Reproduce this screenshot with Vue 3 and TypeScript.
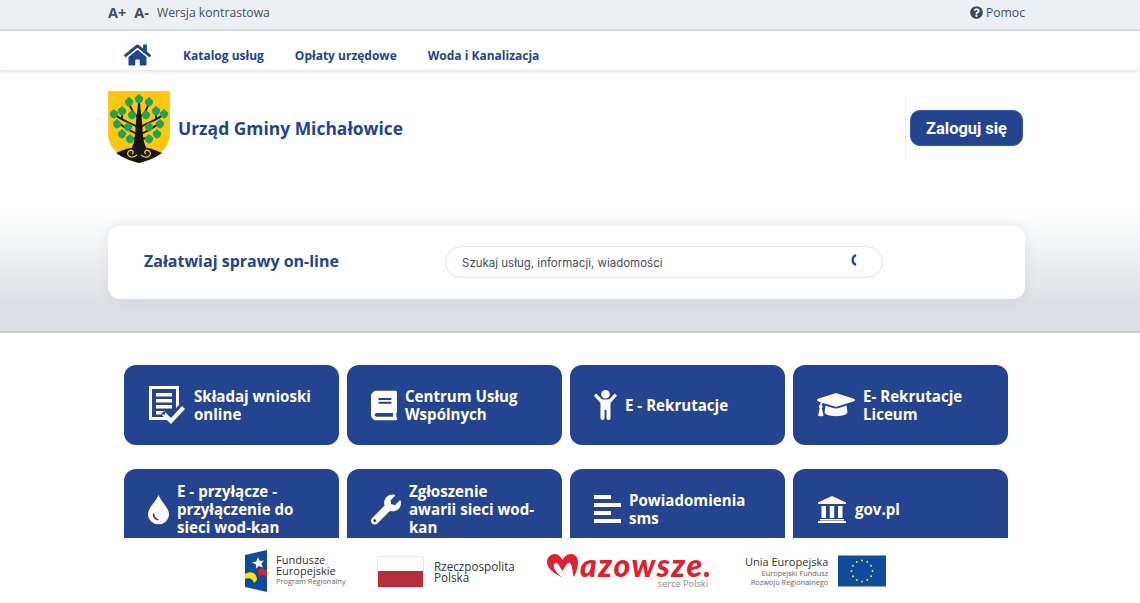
<script setup lang="ts">
interface Tile {
  lines: string[]
  vb: string
  w: number
  h: number
  d: string
}

const homePath = 'M280.37 148.26L96 300.11V464a16 16 0 0 0 16 16l112.06-.29a16 16 0 0 0 15.92-16V368a16 16 0 0 1 16-16h64a16 16 0 0 1 16 16v95.64a16 16 0 0 0 16 16.05L464 480a16 16 0 0 0 16-16V300L295.67 148.26a12.19 12.19 0 0 0-15.3 0zM571.6 251.47L488 182.56V44.05a12 12 0 0 0-12-12h-56a12 12 0 0 0-12 12v72.61L318.47 43a48 48 0 0 0-61 0L4.34 251.47a12 12 0 0 0-1.6 16.9l25.5 31A12 12 0 0 0 45.15 301l235.22-193.74a12.19 12.19 0 0 1 15.3 0L530.9 301a12 12 0 0 0 16.9-1.6l25.5-31a12 12 0 0 0-1.7-16.93z'
const helpPath = 'M504 256c0 136.997-111.043 248-248 248S8 392.997 8 256C8 119.083 119.043 8 256 8s248 111.083 248 248zM262.655 90c-54.497 0-89.255 22.957-116.549 63.758-3.536 5.286-2.353 12.415 2.715 16.258l34.699 26.31c5.205 3.947 12.621 3.008 16.665-2.122 17.864-22.658 30.113-35.797 57.303-35.797 20.429 0 45.698 13.148 45.698 32.958 0 14.976-12.363 22.667-32.534 33.976C247.128 238.528 216 254.941 216 296v4c0 6.627 5.373 12 12 12h56c6.627 0 12-5.373 12-12v-1.333c0-28.462 83.186-29.647 83.186-106.667 0-58.002-60.165-102-116.531-102zM256 338c-25.365 0-46 20.635-46 46 0 25.364 20.635 46 46 46s46-20.636 46-46c0-25.365-20.635-46-46-46z'

const navLinks = ['Katalog usług', 'Opłaty urzędowe', 'Woda i Kanalizacja']

const tiles: Tile[] = [
  {
    lines: ['Składaj wnioski', 'online'],
    vb: '-1 0 38 38', w: 38, h: 38,
    d: 'M0 0h30v19l-3 3V3H3v28h12l3 3H0zM7 7h16v3.4H7zM7 13h16v3.4H7zM7 19h16v3.4H7zM7 25h9v3.4H7zM12 28l3-3 7 7 11-12 3 3-14 15z',
  },
  {
    lines: ['Centrum Usług', 'Wspólnych'],
    vb: '0 0 448 512', w: 26, h: 31,
    d: 'M448 360V24c0-13.3-10.7-24-24-24H96C43 0 0 43 0 96v320c0 53 43 96 96 96h328c13.3 0 24-10.7 24-24v-16c0-7.5-3.5-14.3-8.9-18.7-4.2-15.4-4.2-59.3 0-74.7 5.4-4.3 8.9-11.1 8.9-18.6zM128 134c0-3.3 2.7-6 6-6h212c3.3 0 6 2.7 6 6v20c0 3.3-2.7 6-6 6H134c-3.3 0-6-2.7-6-6v-20zm0 64c0-3.3 2.7-6 6-6h212c3.3 0 6 2.7 6 6v20c0 3.3-2.7 6-6 6H134c-3.3 0-6-2.7-6-6v-20zm253.4 250H96c-17.7 0-32-14.3-32-32 0-17.6 14.4-32 32-32h285.4c-1.9 17.1-1.9 46.9 0 64z',
  },
  {
    lines: ['E - Rekrutacje'],
    vb: '0 0 23 30', w: 23, h: 30,
    d: 'M11.5 0a4.3 4.3 0 1 1 0 8.6 4.3 4.3 0 0 1 0-8.6zM2.2 3.5L7 8.5Q8 9.5 9.5 9.5h4Q15 9.5 16 8.5l4.8-5L23 5.7 16.5 13v15a2 2 0 0 1-4 0v-8h-2v8a2 2 0 0 1-4 0V13L0 5.7z',
  },
  {
    lines: ['E- Rekrutacje', 'Liceum'],
    vb: '0 60 640 400', w: 38, h: 24,
    d: 'M622.34 153.2L343.4 67.5c-15.2-4.67-31.6-4.67-46.79 0L17.66 153.2c-23.54 7.23-23.54 38.36 0 45.59l48.63 14.94c-10.67 13.19-17.23 29.28-17.88 46.9C38.78 266.15 32 276.11 32 288c0 10.78 5.68 19.85 13.86 25.65L20.33 428.53C18.11 438.52 25.71 448 35.94 448h56.11c10.24 0 17.84-9.48 15.62-19.47L82.14 313.65C90.32 307.85 96 298.78 96 288c0-11.57-6.47-21.25-15.66-26.87.76-15.02 8.44-28.3 20.69-36.72L296.6 284.5c9.06 2.78 26.44 6.25 46.79 0l278.95-85.7c23.55-7.24 23.55-38.36 0-45.6zM352.79 315.09c-28.53 8.76-52.84 3.92-65.59 0l-145.02-44.55L128 384c0 35.35 85.96 64 192 64s192-28.65 192-64l-14.18-113.47-145.03 44.56z',
  },
  {
    lines: ['E - przyłącze -', 'przyłączenie do', 'sieci wod-kan'],
    vb: '0 0 22 31', w: 21, h: 31,
    d: 'M11 0C13 7 22 13 22 21a11 10 0 0 1-22 0C0 13 9 7 11 0zM5 20.5c0 3.8 2.5 6 5.5 6.5.8 0 .8-1.4 0-1.5-2-.5-3.5-2.5-3.8-5-.2-1-1.7-1-1.7 0z',
  },
  {
    lines: ['Zgłoszenie', 'awarii sieci wod-', 'kan'],
    vb: '0 0 512 512', w: 30, h: 31,
    d: 'M507.73 109.1c-2.24-9.03-13.54-12.09-20.12-5.51l-74.36 74.36-67.88-11.31-11.31-67.88 74.36-74.36c6.62-6.62 3.43-17.9-5.66-20.16-47.38-11.74-99.55.91-136.58 37.93-39.64 39.64-50.55 97.1-34.05 147.2L18.74 402.76c-24.99 24.99-24.99 65.51 0 90.5 24.99 24.99 65.51 24.99 90.5 0l213.21-213.21c50.12 16.71 107.47 5.68 147.37-34.22 37.07-37.07 49.7-89.32 37.91-136.73zM64 472c-13.25 0-24-10.75-24-24 0-13.26 10.75-24 24-24s24 10.74 24 24c0 13.25-10.75 24-24 24z',
  },
  {
    lines: ['Powiadomienia', 'sms'],
    vb: '0 0 27 28', w: 27, h: 28,
    d: 'M0 0h17v4H0zM0 8h27v4H0zM0 16h17v4H0zM0 24h27v4H0z',
  },
  {
    lines: ['gov.pl'],
    vb: '-1 0 30 27', w: 30, h: 27,
    d: 'M14 0l14 6.5V8H0V6.5zM3.5 10h4.5v12H3.5zM11.8 10h4.4v12h-4.4zM20 10h4.5v12H20zM2 23h24v1.5H2zM0 25h28v2H0z',
  },
]

const leaves: [number, number][] = [
  [31, 8], [21, 11], [41, 11], [6, 23], [14, 20], [24, 24], [38, 24], [48, 20], [56, 23],
  [9, 33], [20, 36], [41, 36], [52, 33], [14, 43], [22, 48], [41, 48], [49, 43],
]

const euStars = Array.from({ length: 12 }, (_, i) => {
  const a = (i * Math.PI) / 6
  return { x: 24 + 10.5 * Math.sin(a), y: 15.5 - 10.5 * Math.cos(a) }
})
</script>

<template>
  <div class="page">
    <div class="topbar">
      <div class="wrap topbar-row">
        <div class="a11y">
          <span class="size">A+</span>
          <span class="size">A-</span>
          <span class="contrast">Wersja kontrastowa</span>
        </div>
        <div class="help">
          <svg viewBox="0 0 512 512" width="13" height="13"><path :d="helpPath" fill="#3f4954" /></svg>
          <span>Pomoc</span>
        </div>
      </div>
    </div>

    <nav class="nav">
      <div class="wrap nav-row">
        <svg class="home" viewBox="0 0 576 512" width="27" height="24"><path :d="homePath" fill="#24448f" /></svg>
        <a v-for="link in navLinks" :key="link" class="nav-link">{{ link }}</a>
      </div>
    </nav>

    <header class="wrap header">
      <div class="brand">
        <svg class="arms" viewBox="0 0 62 72" width="62" height="72">
          <path d="M0 0H62V42C62 60 45 68 31 72C17 68 0 60 0 42z" fill="#fdc70c" stroke="#e3d9b0" stroke-width=".6" />
          <path d="M8 62C16 58 24 56 31 56C38 56 46 58 54 62C47 67 39 70 31 72C23 70 15 67 8 62z" fill="#141414" />
          <path d="M23 58C28 50 27 40 28 30C29 22 30 16 30 10H32C32 16 33 22 34 30C35 40 34 50 39 58z" fill="#141414" />
          <g stroke="#141414" stroke-width="1.8" fill="none">
            <path d="M29 36C24 32 14 30 6 23" />
            <path d="M33 36C38 32 48 30 56 23" />
            <path d="M29 43C25 41 18 38 12 33" />
            <path d="M33 43C37 41 44 38 50 33" />
            <path d="M30 26C26 24 22 16 21 11" />
            <path d="M32 26C36 24 40 16 41 11" />
            <path d="M29 47L22 48" />
            <path d="M33 47L41 48" />
            <path d="M14 29V20" />
            <path d="M48 29V20" />
          </g>
          <path
            v-for="([x, y], i) in leaves"
            :key="i"
            :transform="`translate(${x} ${y})`"
            d="M0-5L4-1.5C4.5 1.5 2.5 4 0 4.5C-2.5 4-4.5 1.5-4-1.5z"
            fill="#1fa35b"
          />
          <path d="M29 64C22 69 17 63 21 60C24 58 27 61 24 63M33 64C40 69 45 63 41 60C38 58 35 61 38 63" fill="none" stroke="#fdc70c" stroke-width="1.3" />
        </svg>
        <h1 class="office">Urząd Gminy Michałowice</h1>
      </div>
      <div class="login-box">
        <button class="login">Zaloguj się</button>
      </div>
    </header>

    <section class="hero">
      <div class="wrap search-card">
        <h2 class="search-title">Załatwiaj sprawy on-line</h2>
        <div class="search">
          <span class="search-text">Szukaj usług, informacji, wiadomości</span>
          <svg class="spinner" viewBox="0 0 8 12" width="8" height="12">
            <path d="M6 1C1.5 3 1.5 9 6 11" fill="none" stroke="#24448f" stroke-width="2.2" />
          </svg>
        </div>
      </div>
    </section>

    <main class="tiles">
      <a v-for="tile in tiles" :key="tile.lines[0]" class="tile">
        <svg :viewBox="tile.vb" :width="tile.w" :height="tile.h" class="tile-icon"><path :d="tile.d" fill="#fff" fill-rule="evenodd" /></svg>
        <span class="tile-text">
          <span v-for="line in tile.lines" :key="line" class="tile-line">{{ line }}</span>
        </span>
      </a>
    </main>

    <footer class="footer">
      <div class="fe-logo">
        <svg viewBox="0 0 22 42" width="22" height="42">
          <path d="M0 5L22 0V42L0 37z" fill="#0f4a9c" />
          <path d="M13 7l1.8 4 4.2-.5-2.6 3.2 1.6 3.8-4-1.4-3.2 2.6.2-4.2L7 12.5l4.2-1z" fill="#fff" />
          <path d="M0 24C6 20 12 23 12 30L9 33C8 29 4 27 0 29z" fill="#fce300" />
          <path d="M13 20C17 17 21 19 22 22V27C19 24 16 25 14 26z" fill="#d8232a" />
        </svg>
        <div class="fe-text">
          <span class="logo-name">Fundusze<br />Europejskie</span>
          <small>Program Regionalny</small>
        </div>
      </div>
      <div class="pl-logo">
        <div class="flag"><i /></div>
        <span class="logo-name">Rzeczpospolita<br />Polska</span>
      </div>
      <div class="maz-logo">
        <div class="maz-word">
          <svg viewBox="0 0 31 24" width="31" height="24">
            <path d="M15.5 23.5C8 20 0 15 0 8C0 3 4 0 8 0C11 0 14 3 15.5 6C17 3 20 0 24 0C28 0 31 3 31 8C31 13 29 19 27 23C25 19 26 12 23 9C21 7.5 19 11 15.5 17C12 11 10 7.5 8 9C5 12 7 17 15.5 23.5z" fill="#e0202e" />
          </svg>
          <span class="maz-text">azowsze.</span>
        </div>
        <small>serce Polski</small>
      </div>
      <div class="eu-logo">
        <div class="eu-text">
          <span class="eu-name">Unia Europejska</span>
          <small>Europejski Fundusz<br />Rozwoju Regionalnego</small>
        </div>
        <svg viewBox="0 0 48 31" width="48" height="32">
          <rect width="48" height="31" fill="#0f4c9d" />
          <circle v-for="(s, i) in euStars" :key="i" :cx="s.x" :cy="s.y" r="1" fill="#fce300" />
        </svg>
      </div>
    </footer>
  </div>
</template>

<style scoped>
.page {
  height: 603px;
  overflow: hidden;
  background: #fff;
  font-family: "Open Sans", "Liberation Sans", sans-serif;
}

.wrap {
  width: 917px;
  margin-left: 108px;
  box-sizing: border-box;
}

.topbar {
  height: 31px;
  background: #edf0f3;
  border-bottom: 2px solid #dde1e5;
  box-sizing: border-box;
}

.topbar-row {
  display: flex;
  justify-content: space-between;
  align-items: center;
  height: 24px;
  color: #464e58;
  font-size: 12.2px;
}

.a11y {
  display: flex;
  align-items: center;
}

.size {
  font-weight: 700;
  font-size: 14.5px;
  margin-right: 8px;
}

.help {
  display: flex;
  align-items: center;
  gap: 3px;
}

.nav {
  height: 39px;
  background: #fff;
  box-shadow: 0 1px 4px rgba(40, 50, 70, 0.18);
  position: relative;
}

.nav-row {
  display: flex;
  align-items: center;
  height: 100%;
  padding-left: 16px;
}

.home {
  margin-right: 32px;
  margin-top: 8px;
}

.nav-link {
  font-size: 12px;
  font-weight: 700;
  color: #24448f;
  margin-right: 31px;
  padding-top: 10px;
}

.header {
  display: flex;
  justify-content: space-between;
  height: 141px;
  padding-top: 21px;
}

.brand {
  display: flex;
  align-items: flex-start;
}

.office {
  margin: 25px 0 0 8px;
  font-size: 17.45px;
  font-weight: 700;
  color: #24448f;
}

.login-box {
  height: 64px;
  margin-top: 5px;
  margin-right: 2px;
  padding-left: 4px;
  border-left: 1px solid #eee;
  display: flex;
  align-items: center;
}

.login {
  width: 113px;
  height: 36px;
  border: 1px solid #3558a8;
  border-radius: 10px;
  background: #24448f;
  color: #fff;
  font-family: Roboto, sans-serif;
  font-size: 16.4px;
  font-weight: 700;
}

.hero {
  height: 122px;
  padding-top: 15px;
  box-sizing: border-box;
  background: linear-gradient(#fff 0, #dcdfe3 80%);
  border-bottom: 2px solid #c8ced8;
}

.search-card {
  display: flex;
  align-items: center;
  height: 73px;
  padding-left: 36px;
  background: #fff;
  border-radius: 12px;
  box-shadow: 0 0 12px rgba(60, 70, 90, 0.1);
}

.search-title {
  width: 301px;
  margin: 0 0 4px;
  font-size: 16px;
  font-weight: 700;
  color: #24448f;
}

.search {
  display: flex;
  align-items: center;
  justify-content: space-between;
  width: 438px;
  height: 32px;
  margin-bottom: 2px;
  box-sizing: border-box;
  padding: 0 24px 0 16px;
  border: 1px solid #e4e6ea;
  border-radius: 16px;
  font-family: Inter, sans-serif;
  font-size: 11.5px;
  color: #454d5b;
}

.search-text {
  padding-top: 2px;
}

.spinner {
  margin-bottom: 3px;
}

.tiles {
  display: grid;
  grid-template-columns: repeat(4, 215px);
  grid-auto-rows: 80px;
  gap: 24px 8px;
  margin: 32px 0 0 124px;
}

.tile {
  display: flex;
  align-items: center;
  gap: 8px;
  padding: 0 20px 0 24px;
  background: #24448f;
  border-radius: 12px;
  color: #fff;
  font-size: 15.1px;
  font-weight: 700;
  line-height: 18px;
}

.tile-icon {
  flex: none;
}

.tile-line {
  display: block;
  white-space: nowrap;
}

.footer {
  position: fixed;
  left: 0;
  right: 0;
  bottom: 0;
  height: 65px;
  box-sizing: border-box;
  padding-left: 245px;
  display: flex;
  align-items: center;
  gap: 30px;
  background: #fff;
  color: #333;
}

.footer small {
  display: block;
  font-size: 7.4px;
  line-height: 11px;
  color: #666;
}

.logo-name {
  font-size: 11px;
  line-height: 11px;
  display: block;
}

.fe-logo,
.pl-logo,
.eu-logo {
  display: flex;
  align-items: center;
  gap: 9px;
}

.fe-text {
  width: 71px;
}

.pl-logo {
  gap: 10px;
  padding-top: 2px;
}

.pl-logo .logo-name {
  width: 83px;
  font-size: 11.7px;
}

.flag {
  width: 47px;
  height: 32px;
  box-sizing: border-box;
  border: 1px solid #e8e8e8;
  background: #fff;
  display: flex;
  align-items: flex-end;
}

.flag i {
  display: block;
  width: 100%;
  height: 16px;
  background: #b82d3a;
}

.maz-logo {
  width: 168px;
  padding-top: 2px;
}

.maz-word {
  display: flex;
  align-items: flex-end;
  gap: 2px;
  height: 24px;
  color: #e0202e;
  font-family: Lato, sans-serif;
  font-weight: 900;
  font-style: italic;
  font-size: 32px;
  line-height: 24px;
  letter-spacing: 1.5px;
}

.maz-text {
  margin-bottom: 1px;
}

.maz-logo small {
  text-align: right;
  margin-right: 7px;
  font-size: 9.2px;
  line-height: 12px;
  color: #888;
}

.eu-logo {
  gap: 10px;
}

.eu-text {
  text-align: right;
}

.eu-name {
  display: block;
  font-size: 11px;
  line-height: 14px;
  font-weight: 500;
}

.eu-text small {
  line-height: 9px;
}
</style>

<style>
html,
body {
  margin: 0;
  overflow: hidden;
}
</style>
